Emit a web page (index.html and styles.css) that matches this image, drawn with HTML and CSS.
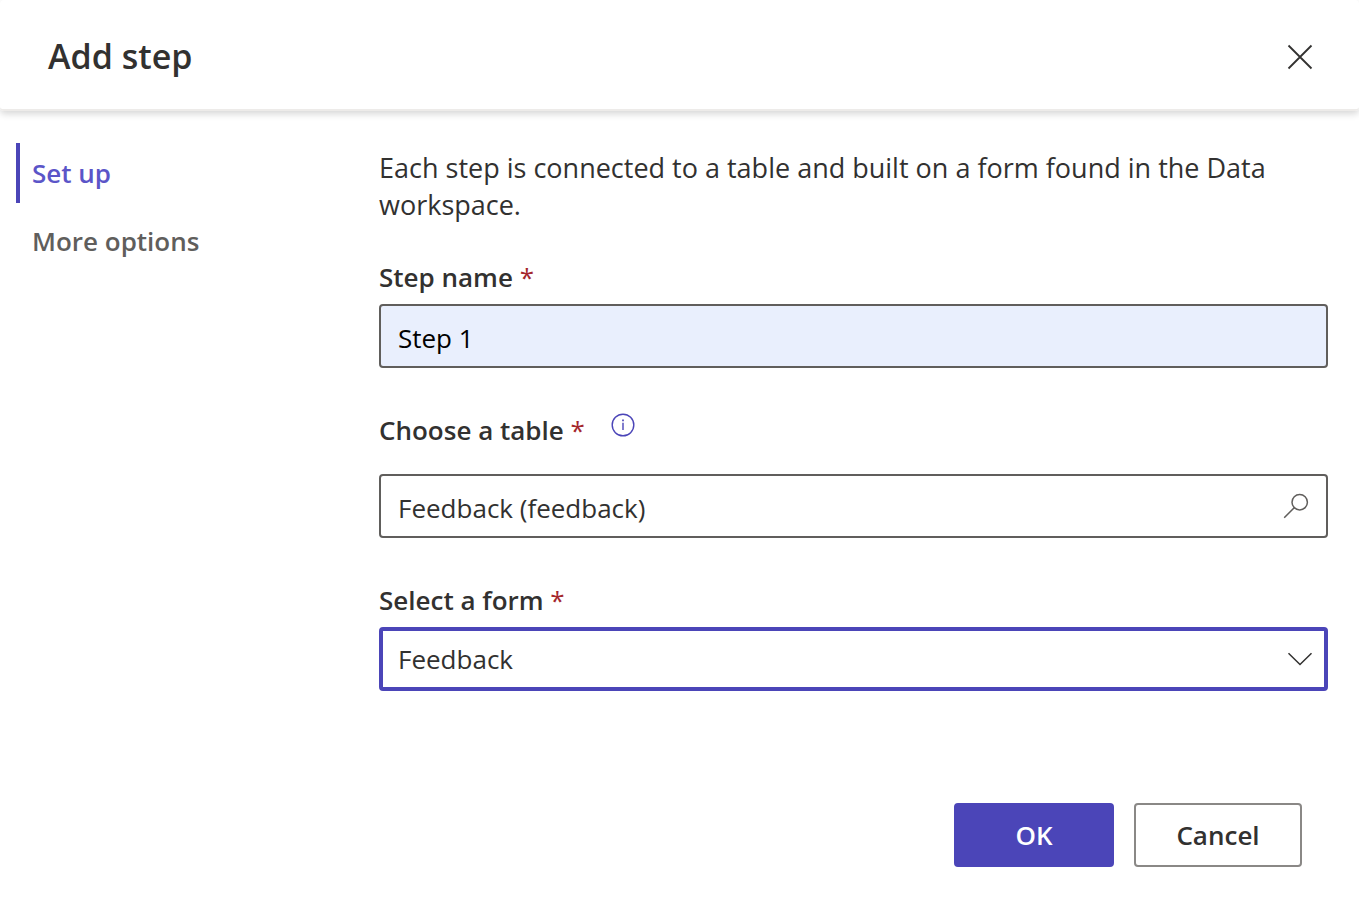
FILE: index.html
```html
<!DOCTYPE html>
<html lang="en">
<head>
<meta charset="utf-8">
<meta name="viewport" content="width=device-width, initial-scale=1">
<title>Add step</title>
<link rel="stylesheet" href="styles.css">
</head>
<body>
<div class="dialog" role="dialog" aria-labelledby="dialog-title">
  <header class="header">
    <h1 class="title" id="dialog-title">Add step</h1>
    <button class="close" type="button" aria-label="Close">
      <svg width="26" height="26" viewBox="0 0 26 26" fill="none" stroke="#323130" stroke-width="1.800"><path d="M1.500 1.500 24.500 24.500M24.500 1.500 1.500 24.500"/></svg>
    </button>
  </header>
  <div class="body">
    <nav class="nav" aria-label="Sections">
      <a class="nav-item nav-item-active" href="#setup" aria-current="page">Set up</a>
      <a class="nav-item" href="#more">More options</a>
    </nav>
    <form class="form" id="setup">
      <p class="intro">Each step is connected to a table and built on a form found in the Data workspace.</p>
      <div class="field">
        <label class="label" for="step-name">Step name <span class="required">*</span></label>
        <input class="control control-filled" id="step-name" type="text" value="Step 1" required>
      </div>
      <div class="field field-lookup">
        <div class="label-row">
          <label class="label" for="table">Choose a table <span class="required">*</span></label>
          <button class="info" type="button" aria-label="About tables">
            <svg width="24" height="24" viewBox="0 0 24 24" fill="none" stroke="#4b45b8"><circle cx="12" cy="12" r="10.800" stroke-width="1.400"/><path d="M12 9.800v7.200" stroke-width="1.400"/><path d="M12 6.500v1.700" stroke-width="1.700"/></svg>
          </button>
        </div>
        <div class="control-wrap">
          <input class="control" id="table" type="text" value="Feedback (feedback)" required>
          <svg class="control-icon" width="26" height="26" viewBox="0 0 26 26" fill="none" stroke="#605e5c" stroke-width="1.500"><circle cx="16.700" cy="9.200" r="7.700"/><path d="M11.200 14.700 1.200 24.700"/></svg>
        </div>
      </div>
      <div class="field">
        <label class="label" for="form-select">Select a form <span class="required">*</span></label>
        <div class="control-wrap">
          <select class="control control-focused" id="form-select" required><option>Feedback</option></select>
          <svg class="control-icon control-chevron" width="26" height="14" viewBox="0 0 26 14" fill="none" stroke="#323130" stroke-width="1.500"><path d="M1.500 1.200 13 12.500 24.500 1.200"/></svg>
        </div>
      </div>
      <div class="actions">
        <button class="button button-primary" type="submit">OK</button>
        <button class="button button-secondary" type="button">Cancel</button>
      </div>
    </form>
  </div>
</div>
</body>
</html>
```
FILE: styles.css
```css
* {
  box-sizing: border-box;
}

body {
  margin: 0;
  background: #fff;
  color: #323130;
  font-family: "Segoe UI", "Open Sans", "Noto Sans", sans-serif;
  font-size: 26px;
  line-height: 37px;
}

button,
input,
select {
  font: inherit;
  color: inherit;
}

svg {
  display: block;
}

.header {
  display: flex;
  align-items: center;
  justify-content: space-between;
  padding: 34px 44px 30px 48px;
  border-bottom: 2px solid #edebe9;
  border-radius: 4px;
  box-shadow: 0 3px 7px rgba(0, 0, 0, 0.16);
}

.title {
  margin: 0;
  font-size: 34px;
  font-weight: 600;
  line-height: 45px;
}

.close {
  padding: 2px;
  border: 0;
  background: none;
}

.body {
  display: grid;
  grid-template-columns: 347px minmax(0, 1fr);
  padding: 32px 31px 40px 16px;
  column-gap: 16px;
}

.nav {
  display: flex;
  flex-direction: column;
  gap: 8px;
}

.nav-item {
  padding: 12px;
  border-left: 4px solid transparent;
  color: #605e5c;
  font-weight: 600;
  line-height: 36px;
  text-decoration: none;
}

.nav-item-active {
  border-left-color: #4b45b8;
  color: #5b55c8;
}

.form {
  display: flex;
  flex-direction: column;
  gap: 44px;
  padding-top: 6px;
}

.intro {
  margin: 0 0 -8px;
  font-size: 27px;
}

.field {
  display: flex;
  flex-direction: column;
  gap: 8px;
}

.field-lookup {
  gap: 25px;
}

.label-row {
  display: flex;
  gap: 26px;
}

.label {
  font-weight: 600;
}

.required {
  color: #a4262c;
  font-weight: 400;
}

.info {
  align-self: flex-start;
  padding: 1px 0;
  border: 0;
  background: none;
}

.control-wrap {
  display: grid;
  align-items: center;
}

.control-wrap > * {
  grid-area: 1 / 1;
}

.control {
  width: 100%;
  height: 64px;
  padding: 4px 64px 0 17px;
  border: 2px solid #605e5c;
  border-radius: 4px;
  background: #fff;
  outline: 0;
  appearance: none;
}

.control-filled {
  background: #e9effd;
  color: #000;
}

.control-focused {
  padding: 0 64px 0 15px;
  border: 4px solid #4b45b8;
}

.control-icon {
  justify-self: end;
  margin-right: 19px;
  pointer-events: none;
}

.control-chevron {
  margin-right: 15px;
}

.actions {
  display: flex;
  justify-content: flex-end;
  gap: 20px;
  padding: 68px 26px 0 0;
}

.button {
  height: 64px;
  border: 2px solid #8a8886;
  border-radius: 4px;
  background: #fff;
  font-weight: 600;
}

.button-primary {
  min-width: 160px;
  border-color: #4b45b8;
  background: #4b45b8;
  color: #fff;
}

.button-secondary {
  min-width: 168px;
}
```
